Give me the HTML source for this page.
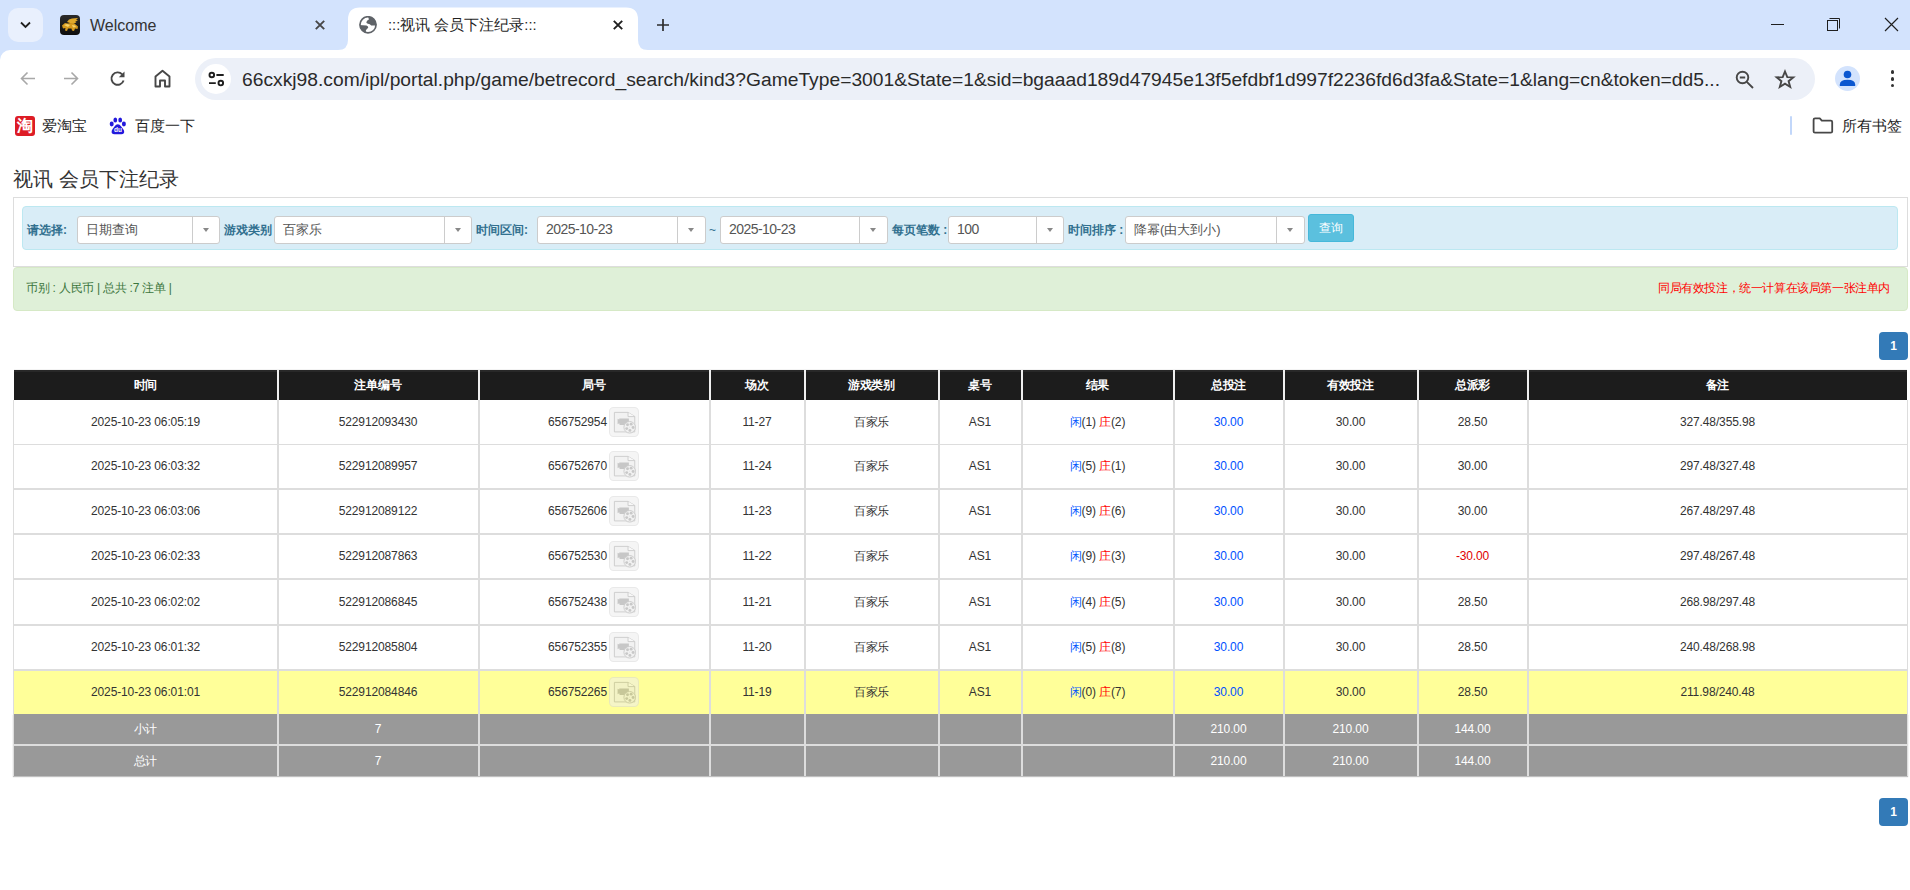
<!DOCTYPE html>
<html><head><meta charset="utf-8">
<style>
*{box-sizing:border-box}
html,body{margin:0;padding:0;width:1910px;height:890px;overflow:hidden;background:#fff;font-family:"Liberation Sans",sans-serif;color:#333}
.a{position:absolute}
.c{position:absolute;text-align:center;font-size:12px;color:#333;white-space:nowrap;letter-spacing:-0.13px}
.c .film{display:inline-block;width:30px;height:30px;vertical-align:middle;margin-left:3px;position:relative;top:-1px;left:-0.5px}
.c .film svg{display:block}
#tabs{position:absolute;left:0;top:0;width:1910px;height:60px;background:#d3e3fd}
#toolbar{position:absolute;left:0;top:50px;width:1910px;height:56px;background:#fff;border-top-left-radius:10px}
.ui{font-family:"Liberation Sans",sans-serif;color:#1f1f1f}
.lbl{position:absolute;top:216px;height:28px;line-height:28px;font-size:12px;font-weight:bold;color:#31708f;white-space:nowrap}
.sel{position:absolute;top:216px;height:28px;background:#fff;border:1px solid #ccc;border-radius:3px;font-size:13px;color:#555;line-height:25px;padding-left:8px;white-space:nowrap}
.sel .dg{font-size:14px;letter-spacing:-0.55px;position:relative;top:-0.5px;left:0}
.sel .dv{position:absolute;top:0;bottom:0;width:1px;background:#ccc}
.sel .ar{position:absolute;top:11px;width:0;height:0;border-left:4px solid transparent;border-right:4px solid transparent;border-top:4px solid #888;border-left-width:3.5px;border-right-width:3.5px}
</style></head><body>
<div id="tabs">
  <div class="a" style="left:8px;top:8px;width:35px;height:34px;border-radius:10px;background:#e9f0fd"></div>
  <svg class="a" style="left:19px;top:19px" width="13" height="12" viewBox="0 0 13 12"><path d="M2 3.5 L6.5 8 L11 3.5" fill="none" stroke="#1f1f1f" stroke-width="1.8"/></svg>
  <div class="a" style="left:60px;top:15px;width:20px;height:20px;border-radius:4px;background:linear-gradient(#2a2a2a,#0d0d0d)"></div>
  <svg class="a" style="left:60px;top:15px" width="20" height="20" viewBox="0 0 20 20"><path d="M7 7 L9 4.5 L12 3.5 L18 3 L16 5 L18 5.2 L15 7 L16.5 7.5 L13 9 Z" fill="#e0a82a"/><path d="M2 10.5 L5 8 L8 8.5 L11 8 L15 9 L18 11.5 L17.5 14 L15 13.5 L14 16 L12 15.5 L11.5 13.5 L8 13.5 L7 16 L5 15.5 L5.5 13 L3 13.5 Z" fill="#d69a1e"/><path d="M4 10 L7 9 L10 10 L8 12 Z M12 10 L15 10.5 L16 12 L13 12.5 Z" fill="#f6d36a"/></svg>
  <div class="a ui" style="left:90px;top:16px;font-size:16px;line-height:20px;color:#333">Welcome</div>
  <svg class="a" style="left:313px;top:18px" width="14" height="14" viewBox="0 0 14 14"><path d="M2.8 2.8 L11.2 11.2 M11.2 2.8 L2.8 11.2" stroke="#474747" stroke-width="1.9"/></svg>
  <!-- active tab -->
  <svg class="a" style="left:338px;top:7px" width="310" height="43" viewBox="0 0 310 43"><path d="M0 43 Q10 43 10 33 V12.5 Q10 0.5 22 0.5 H288 Q300 0.5 300 12.5 V33 Q300 43 310 43 Z" fill="#fff"/></svg>
  <svg class="a" style="left:359px;top:16px" width="18" height="18" viewBox="0 0 18 18"><defs><clipPath id="gc"><circle cx="9" cy="8.8" r="8.2"/></clipPath></defs><g clip-path="url(#gc)" fill="#5f6368"><path d="M9.9 3.6 Q8 4.2 7.3 6.3 Q7.6 7.6 9 7.8 Q11 8 12.2 9.6 L18 9.4 L18 0 L9 0 Z"/><path d="M0 9 L7.4 9.5 Q9.3 10 9.2 11.7 Q7.9 12.7 6.9 14.3 L6.9 18 L0 18 Z"/></g><circle cx="9" cy="8.8" r="8.05" fill="none" stroke="#5f6368" stroke-width="1.7"/></svg>
  <div class="a ui" style="left:388px;top:15px;font-size:14.7px;line-height:20px;color:#1f1f1f;white-space:nowrap">:::视讯 会员下注纪录:::</div>
  <svg class="a" style="left:611px;top:18px" width="14" height="14" viewBox="0 0 14 14"><path d="M2.8 2.8 L11.2 11.2 M11.2 2.8 L2.8 11.2" stroke="#1f1f1f" stroke-width="1.9"/></svg>
  <svg class="a" style="left:656px;top:18px" width="14" height="14" viewBox="0 0 14 14"><path d="M7 1 V13 M1 7 H13" stroke="#2d2d2d" stroke-width="1.7"/></svg>
  <!-- window controls -->
  <div class="a" style="left:1771px;top:24px;width:13px;height:1px;background:#1f1f1f"></div>
  <svg class="a" style="left:1826px;top:17px" width="15" height="15" viewBox="0 0 15 15"><rect x="1.5" y="3.5" width="10" height="10" fill="none" stroke="#1f1f1f" stroke-width="1"/><path d="M3.5 1.5 H13.5 V11.5" fill="none" stroke="#1f1f1f" stroke-width="1"/></svg>
  <svg class="a" style="left:1884px;top:17px" width="15" height="15" viewBox="0 0 15 15"><path d="M1 1 L14 14 M14 1 L1 14" stroke="#1f1f1f" stroke-width="1.15"/></svg>
</div>
<div id="toolbar">
  <svg class="a" style="left:19px;top:20px" width="17" height="17" viewBox="0 0 17 17"><path d="M16 8.5 H3 M8.5 2.5 L2.5 8.5 L8.5 14.5" fill="none" stroke="#a8a8a8" stroke-width="1.6"/></svg>
  <svg class="a" style="left:63px;top:20px" width="17" height="17" viewBox="0 0 17 17"><path d="M1 8.5 H14 M8.5 2.5 L14.5 8.5 L8.5 14.5" fill="none" stroke="#a8a8a8" stroke-width="1.6"/></svg>
  <svg class="a" style="left:109px;top:20px" width="18" height="18" viewBox="0 0 18 18"><path d="M14.6 10.5 A6.2 6.2 0 1 1 13.2 4.3" fill="none" stroke="#474747" stroke-width="1.9"/><path d="M15.5 1.5 V7.2 H9.8 Z" fill="#474747"/></svg>
  <svg class="a" style="left:154px;top:19px" width="17" height="19" viewBox="0 0 17 19"><path d="M1.5 17.5 V7.5 L8.5 1.8 L15.5 7.5 V17.5 H11 V11.5 H6 V17.5 Z" fill="none" stroke="#474747" stroke-width="1.9" stroke-linejoin="round"/></svg>
  <div class="a" style="left:195px;top:8px;width:1620px;height:42px;border-radius:21px;background:#ecf0f8"></div>
  <div class="a" style="left:201px;top:14px;width:30px;height:30px;border-radius:15px;background:#fff"></div>
  <svg class="a" style="left:207px;top:20px" width="18" height="18" viewBox="0 0 18 18"><circle cx="4.8" cy="5" r="2.3" fill="none" stroke="#1f1f1f" stroke-width="1.9"/><path d="M9.4 5 H16.7 M2 13.1 H8.8" stroke="#1f1f1f" stroke-width="1.9"/><circle cx="13.8" cy="13.1" r="2.3" fill="none" stroke="#1f1f1f" stroke-width="1.9"/></svg>
  <div id="url" class="a ui" style="left:242px;top:18px;font-size:19.25px;line-height:24px;color:#2a2a2a;white-space:nowrap">66cxkj98.com/ipl/portal.php/game/betrecord_search/kind3?GameType=3001&amp;State=1&amp;sid=bgaaad189d47945e13f5efdbf1d997f2236fd6d3fa&amp;State=1&amp;lang=cn&amp;token=dd5...</div>
  <svg class="a" style="left:1735px;top:20px" width="20" height="20" viewBox="0 0 20 20"><circle cx="7.5" cy="7.5" r="5.8" fill="none" stroke="#474747" stroke-width="1.9"/><path d="M4.8 7.5 H10.2 M11.8 11.8 L18 18" stroke="#474747" stroke-width="1.9"/></svg>
  <svg class="a" style="left:1774px;top:19px" width="22" height="21" viewBox="0 0 22 21"><path d="M11 2.5 L13.3 8.1 L19.3 8.4 L14.6 12.2 L16.2 18 L11 14.7 L5.8 18 L7.4 12.2 L2.7 8.4 L8.7 8.1 Z" fill="none" stroke="#474747" stroke-width="1.9" stroke-linejoin="miter"/></svg>
  <div class="a" style="left:1835px;top:16px;width:25px;height:25px;border-radius:50%;background:#d3e3fd"></div>
  <svg class="a" style="left:1835px;top:16px" width="25" height="25" viewBox="0 0 25 25"><circle cx="12.5" cy="8.5" r="3.8" fill="#0b57d0"/><path d="M4.8 18.5 Q4.8 13.8 12.5 13.8 Q20.2 13.8 20.2 18.5 V19.9 H4.8 Z" fill="#0b57d0"/></svg>
  <div class="a" style="left:1890.6px;top:20.1px;width:3.6px;height:3.6px;border-radius:50%;background:#333"></div>
  <div class="a" style="left:1890.6px;top:27px;width:3.6px;height:3.6px;border-radius:50%;background:#333"></div>
  <div class="a" style="left:1890.6px;top:33.8px;width:3.6px;height:3.6px;border-radius:50%;background:#333"></div>
</div>
<!-- bookmarks -->
<div class="a" style="left:15px;top:116px;width:20px;height:20px;border-radius:3px;background:#dd1c25;color:#fff;font-size:16px;font-weight:bold;line-height:20px;text-align:center;overflow:hidden">淘</div>
<div class="a ui" style="left:42px;top:116px;font-size:15px;line-height:20px;color:#1f1f1f;white-space:nowrap">爱淘宝</div>
<svg class="a" style="left:109px;top:116px" width="18" height="20" viewBox="0 0 18 20"><ellipse cx="2.7" cy="8" rx="2" ry="2.4" fill="#2319dc"/><ellipse cx="6.3" cy="3.9" rx="1.9" ry="2.5" fill="#2319dc"/><ellipse cx="11.2" cy="3.9" rx="1.9" ry="2.5" fill="#2319dc"/><ellipse cx="14.9" cy="8" rx="2" ry="2.4" fill="#2319dc"/><path d="M8.8 8.2 Q7 8.2 5.5 10.5 Q3.5 13 2.8 14.5 Q1.8 18.3 5.5 18.3 H12.3 Q16 18.3 15 14.5 Q14.2 13 12.2 10.5 Q10.7 8.2 8.8 8.2 Z" fill="#2319dc"/><text x="8.9" y="16.3" font-size="6.5" fill="#fff" font-family="Liberation Sans" text-anchor="middle" font-weight="bold">du</text></svg>
<div class="a ui" style="left:135px;top:116px;font-size:15px;line-height:20px;color:#1f1f1f;white-space:nowrap">百度一下</div>
<div class="a" style="left:1790px;top:116px;width:2px;height:19px;background:#c2d7fa;border-radius:1px"></div>
<svg class="a" style="left:1812px;top:117px" width="22" height="17" viewBox="0 0 22 17"><path d="M1.6 2.8 Q1.6 1.4 3 1.4 H7.8 L9.8 3.6 H18.8 Q20.2 3.6 20.2 5 V14.4 Q20.2 15.6 18.8 15.6 H3 Q1.6 15.6 1.6 14.4 Z" fill="none" stroke="#474747" stroke-width="1.8" stroke-linejoin="round"/></svg>
<div class="a ui" style="left:1842px;top:116px;font-size:15px;line-height:20px;color:#1f1f1f;white-space:nowrap">所有书签</div>

<!-- page -->
<div class="a" style="left:13px;top:166px;font-size:20px;line-height:26px;color:#333;white-space:nowrap">视讯 会员下注纪录</div>
<div class="a" style="left:13px;top:197px;width:1895px;height:70px;border:1px solid #ddd;background:#fff"></div>
<div class="a" style="left:22px;top:206px;width:1876px;height:44px;border:1px solid #bce8f1;background:#d9edf7;border-radius:4px"></div>
<div class="lbl" style="left:27px">请选择:</div>
<div class="sel" style="left:77px;width:143px">日期查询<div class="dv" style="left:114px"></div><div class="ar" style="left:125px"></div></div>
<div class="lbl" style="left:224px">游戏类别</div>
<div class="sel" style="left:274px;width:198px">百家乐<div class="dv" style="left:169px"></div><div class="ar" style="left:180px"></div></div>
<div class="lbl" style="left:476px">时间区间:</div>
<div class="sel" style="left:537px;width:169px"><span class="dg">2025-10-23</span><div class="dv" style="left:139px"></div><div class="ar" style="left:150px"></div></div>
<div class="a" style="left:709px;top:216px;line-height:28px;font-size:12px;color:#31708f">~</div>
<div class="sel" style="left:720px;width:168px"><span class="dg">2025-10-23</span><div class="dv" style="left:138px"></div><div class="ar" style="left:149px"></div></div>
<div class="lbl" style="left:892px">每页笔数 :</div>
<div class="sel" style="left:948px;width:116px"><span class="dg">100</span><div class="dv" style="left:87px"></div><div class="ar" style="left:98px"></div></div>
<div class="lbl" style="left:1068px">时间排序 :</div>
<div class="sel" style="left:1125px;width:180px">降幂(由大到小)<div class="dv" style="left:150px"></div><div class="ar" style="left:161px"></div></div>
<div class="a" style="left:1308px;top:214px;width:46px;height:28px;border-radius:3px;background:#5bc0de;border:1px solid #46b8da;color:#fff;font-size:12px;line-height:26px;text-align:center">查询</div>

<div class="a" style="left:13px;top:267px;width:1895px;height:44px;border:1px solid #d6e9c6;background:#dff0d8;border-radius:4px"></div>
<div class="a" style="left:26px;top:280px;font-size:12px;letter-spacing:-0.25px;line-height:17px;color:#3c763d;white-space:nowrap">币别 : 人民币 | 总共 :7 注单 |</div>
<div class="a" style="right:20px;top:280px;font-size:12px;letter-spacing:-0.4px;line-height:17px;color:#ff0000;white-space:nowrap">同局有效投注，统一计算在该局第一张注单内</div>

<div class="a" style="left:1879px;top:332px;width:29px;height:28px;border-radius:4px;background:#337ab7;color:#fff;font-size:12px;font-weight:bold;line-height:28px;text-align:center">1</div>
<div style="position:absolute;left:14px;top:370px;width:1893px;height:30px;background:linear-gradient(#282828 0,#282828 2px,#1c1c1c 2px)"></div>
<div class="c" style="left:13.5px;width:264.0px;top:370px;height:30px;line-height:30px;color:#fff;font-weight:bold">时间</div>
<div class="c" style="left:277.5px;width:201.0px;top:370px;height:30px;line-height:30px;color:#fff;font-weight:bold">注单编号</div>
<div class="c" style="left:478.5px;width:231.0px;top:370px;height:30px;line-height:30px;color:#fff;font-weight:bold">局号</div>
<div class="c" style="left:709.5px;width:95.0px;top:370px;height:30px;line-height:30px;color:#fff;font-weight:bold">场次</div>
<div class="c" style="left:804.5px;width:134.0px;top:370px;height:30px;line-height:30px;color:#fff;font-weight:bold">游戏类别</div>
<div class="c" style="left:938.5px;width:83.0px;top:370px;height:30px;line-height:30px;color:#fff;font-weight:bold">桌号</div>
<div class="c" style="left:1021.5px;width:152.0px;top:370px;height:30px;line-height:30px;color:#fff;font-weight:bold">结果</div>
<div class="c" style="left:1173.5px;width:110.0px;top:370px;height:30px;line-height:30px;color:#fff;font-weight:bold">总投注</div>
<div class="c" style="left:1283.5px;width:134.0px;top:370px;height:30px;line-height:30px;color:#fff;font-weight:bold">有效投注</div>
<div class="c" style="left:1417.5px;width:110.0px;top:370px;height:30px;line-height:30px;color:#fff;font-weight:bold">总派彩</div>
<div class="c" style="left:1527.5px;width:380.0px;top:370px;height:30px;line-height:30px;color:#fff;font-weight:bold">备注</div>
<div style="position:absolute;left:13px;top:400px;width:1895px;height:44px;background:#fff"></div>
<div style="position:absolute;left:13px;top:445px;width:1895px;height:43px;background:#fff"></div>
<div style="position:absolute;left:13px;top:490px;width:1895px;height:43px;background:#fff"></div>
<div style="position:absolute;left:13px;top:535px;width:1895px;height:43px;background:#fff"></div>
<div style="position:absolute;left:13px;top:580px;width:1895px;height:44px;background:#fff"></div>
<div style="position:absolute;left:13px;top:626px;width:1895px;height:43px;background:#fff"></div>
<div style="position:absolute;left:13px;top:671px;width:1895px;height:43px;background:#ffff99"></div>
<div style="position:absolute;left:13px;top:714px;width:1895px;height:62px;background:#999;box-shadow:0 1px 1px rgba(0,0,0,.25)"></div>
<div style="position:absolute;left:13px;top:744px;width:1895px;height:2px;background:#ddd"></div>
<div style="position:absolute;left:13px;top:444px;width:1895px;height:1px;background:#ddd"></div>
<div style="position:absolute;left:13px;top:488px;width:1895px;height:2px;background:#ddd"></div>
<div style="position:absolute;left:13px;top:533px;width:1895px;height:2px;background:#ddd"></div>
<div style="position:absolute;left:13px;top:578px;width:1895px;height:2px;background:#ddd"></div>
<div style="position:absolute;left:13px;top:624px;width:1895px;height:2px;background:#ddd"></div>
<div style="position:absolute;left:13px;top:669px;width:1895px;height:2px;background:#ddd"></div>
<div style="position:absolute;left:277.0px;top:370px;width:2px;height:406px;background:#ddd"></div>
<div style="position:absolute;left:478.0px;top:370px;width:2px;height:406px;background:#ddd"></div>
<div style="position:absolute;left:709.0px;top:370px;width:2px;height:406px;background:#ddd"></div>
<div style="position:absolute;left:804.0px;top:370px;width:2px;height:406px;background:#ddd"></div>
<div style="position:absolute;left:938.0px;top:370px;width:2px;height:406px;background:#ddd"></div>
<div style="position:absolute;left:1021.0px;top:370px;width:2px;height:406px;background:#ddd"></div>
<div style="position:absolute;left:1173.0px;top:370px;width:2px;height:406px;background:#ddd"></div>
<div style="position:absolute;left:1283.0px;top:370px;width:2px;height:406px;background:#ddd"></div>
<div style="position:absolute;left:1417.0px;top:370px;width:2px;height:406px;background:#ddd"></div>
<div style="position:absolute;left:1527.0px;top:370px;width:2px;height:406px;background:#ddd"></div>
<div style="position:absolute;left:13px;top:400px;width:1px;height:376px;background:#ddd"></div>
<div style="position:absolute;left:277.0px;top:369px;width:2px;height:31px;background:#efefef"></div>
<div style="position:absolute;left:478.0px;top:369px;width:2px;height:31px;background:#efefef"></div>
<div style="position:absolute;left:709.0px;top:369px;width:2px;height:31px;background:#efefef"></div>
<div style="position:absolute;left:804.0px;top:369px;width:2px;height:31px;background:#efefef"></div>
<div style="position:absolute;left:938.0px;top:369px;width:2px;height:31px;background:#efefef"></div>
<div style="position:absolute;left:1021.0px;top:369px;width:2px;height:31px;background:#efefef"></div>
<div style="position:absolute;left:1173.0px;top:369px;width:2px;height:31px;background:#efefef"></div>
<div style="position:absolute;left:1283.0px;top:369px;width:2px;height:31px;background:#efefef"></div>
<div style="position:absolute;left:1417.0px;top:369px;width:2px;height:31px;background:#efefef"></div>
<div style="position:absolute;left:1527.0px;top:369px;width:2px;height:31px;background:#efefef"></div>
<div style="position:absolute;left:14px;top:369px;width:1893px;height:1px;background:#f3f3f3"></div>
<div style="position:absolute;left:1907px;top:400px;width:1px;height:376px;background:#ddd"></div>
<div class="c" style="left:13.5px;width:264.0px;top:400px;height:44px;line-height:44px;">2025-10-23 06:05:19</div>
<div class="c" style="left:277.5px;width:201.0px;top:400px;height:44px;line-height:44px;">522912093430</div>
<div class="c" style="left:478.5px;width:231.0px;top:400px;height:44px;line-height:44px;"><span class="ju">656752954</span><span class="film"><svg width="30" height="30" viewBox="0 0 29 29" style="opacity:.55"><rect x="0.5" y="0.5" width="28" height="28" rx="4" fill="#eeeeee" stroke="#d8d8d8"/>
<path d="M5.2 5.2 H18.4 L24.9 9.1 V24.1 H5.2 Z" fill="#e9e9e9" stroke="#a2a2a2" stroke-width="0.9"/>
<path d="M18.4 5.2 V9.3 H24.9" fill="#f4f4f4" stroke="#a2a2a2" stroke-width="0.9"/>
<path d="M8.3 11.3 L9.9 12.2 V11.1 H19.2 V17.5 H10.3 L9.9 15.8 L8.3 16.7 Z" fill="#9a9a9a"/>
<circle cx="20" cy="19.6" r="5.6" fill="#e6e6e6" stroke="#a2a2a2" stroke-width="0.9"/>
<circle cx="17.9" cy="17.2" r="1.4" fill="#9c9c9c"/><circle cx="21.4" cy="16.6" r="1.4" fill="#9c9c9c"/>
<circle cx="23.3" cy="19.8" r="1.4" fill="#9c9c9c"/><circle cx="17.1" cy="20.9" r="1.4" fill="#9c9c9c"/>
<circle cx="20.2" cy="22.6" r="1.4" fill="#9c9c9c"/><circle cx="19.9" cy="19.4" r="0.4" fill="#aaa"/></svg></span></div>
<div class="c" style="left:709.5px;width:95.0px;top:400px;height:44px;line-height:44px;">11-27</div>
<div class="c" style="left:804.5px;width:134.0px;top:400px;height:44px;line-height:44px;">百家乐</div>
<div class="c" style="left:938.5px;width:83.0px;top:400px;height:44px;line-height:44px;">AS1</div>
<div class="c" style="left:1021.5px;width:152.0px;top:400px;height:44px;line-height:44px;"><span style="color:#0055ff">闲</span>(1) <span style="color:#ff0000">庄</span>(2)</div>
<div class="c" style="left:1173.5px;width:110.0px;top:400px;height:44px;line-height:44px;color:#0050ff">30.00</div>
<div class="c" style="left:1283.5px;width:134.0px;top:400px;height:44px;line-height:44px;">30.00</div>
<div class="c" style="left:1417.5px;width:110.0px;top:400px;height:44px;line-height:44px;">28.50</div>
<div class="c" style="left:1527.5px;width:380.0px;top:400px;height:44px;line-height:44px;">327.48/355.98</div>
<div class="c" style="left:13.5px;width:264.0px;top:445px;height:43px;line-height:43px;">2025-10-23 06:03:32</div>
<div class="c" style="left:277.5px;width:201.0px;top:445px;height:43px;line-height:43px;">522912089957</div>
<div class="c" style="left:478.5px;width:231.0px;top:445px;height:43px;line-height:43px;"><span class="ju">656752670</span><span class="film"><svg width="30" height="30" viewBox="0 0 29 29" style="opacity:.55"><rect x="0.5" y="0.5" width="28" height="28" rx="4" fill="#eeeeee" stroke="#d8d8d8"/>
<path d="M5.2 5.2 H18.4 L24.9 9.1 V24.1 H5.2 Z" fill="#e9e9e9" stroke="#a2a2a2" stroke-width="0.9"/>
<path d="M18.4 5.2 V9.3 H24.9" fill="#f4f4f4" stroke="#a2a2a2" stroke-width="0.9"/>
<path d="M8.3 11.3 L9.9 12.2 V11.1 H19.2 V17.5 H10.3 L9.9 15.8 L8.3 16.7 Z" fill="#9a9a9a"/>
<circle cx="20" cy="19.6" r="5.6" fill="#e6e6e6" stroke="#a2a2a2" stroke-width="0.9"/>
<circle cx="17.9" cy="17.2" r="1.4" fill="#9c9c9c"/><circle cx="21.4" cy="16.6" r="1.4" fill="#9c9c9c"/>
<circle cx="23.3" cy="19.8" r="1.4" fill="#9c9c9c"/><circle cx="17.1" cy="20.9" r="1.4" fill="#9c9c9c"/>
<circle cx="20.2" cy="22.6" r="1.4" fill="#9c9c9c"/><circle cx="19.9" cy="19.4" r="0.4" fill="#aaa"/></svg></span></div>
<div class="c" style="left:709.5px;width:95.0px;top:445px;height:43px;line-height:43px;">11-24</div>
<div class="c" style="left:804.5px;width:134.0px;top:445px;height:43px;line-height:43px;">百家乐</div>
<div class="c" style="left:938.5px;width:83.0px;top:445px;height:43px;line-height:43px;">AS1</div>
<div class="c" style="left:1021.5px;width:152.0px;top:445px;height:43px;line-height:43px;"><span style="color:#0055ff">闲</span>(5) <span style="color:#ff0000">庄</span>(1)</div>
<div class="c" style="left:1173.5px;width:110.0px;top:445px;height:43px;line-height:43px;color:#0050ff">30.00</div>
<div class="c" style="left:1283.5px;width:134.0px;top:445px;height:43px;line-height:43px;">30.00</div>
<div class="c" style="left:1417.5px;width:110.0px;top:445px;height:43px;line-height:43px;">30.00</div>
<div class="c" style="left:1527.5px;width:380.0px;top:445px;height:43px;line-height:43px;">297.48/327.48</div>
<div class="c" style="left:13.5px;width:264.0px;top:490px;height:43px;line-height:43px;">2025-10-23 06:03:06</div>
<div class="c" style="left:277.5px;width:201.0px;top:490px;height:43px;line-height:43px;">522912089122</div>
<div class="c" style="left:478.5px;width:231.0px;top:490px;height:43px;line-height:43px;"><span class="ju">656752606</span><span class="film"><svg width="30" height="30" viewBox="0 0 29 29" style="opacity:.55"><rect x="0.5" y="0.5" width="28" height="28" rx="4" fill="#eeeeee" stroke="#d8d8d8"/>
<path d="M5.2 5.2 H18.4 L24.9 9.1 V24.1 H5.2 Z" fill="#e9e9e9" stroke="#a2a2a2" stroke-width="0.9"/>
<path d="M18.4 5.2 V9.3 H24.9" fill="#f4f4f4" stroke="#a2a2a2" stroke-width="0.9"/>
<path d="M8.3 11.3 L9.9 12.2 V11.1 H19.2 V17.5 H10.3 L9.9 15.8 L8.3 16.7 Z" fill="#9a9a9a"/>
<circle cx="20" cy="19.6" r="5.6" fill="#e6e6e6" stroke="#a2a2a2" stroke-width="0.9"/>
<circle cx="17.9" cy="17.2" r="1.4" fill="#9c9c9c"/><circle cx="21.4" cy="16.6" r="1.4" fill="#9c9c9c"/>
<circle cx="23.3" cy="19.8" r="1.4" fill="#9c9c9c"/><circle cx="17.1" cy="20.9" r="1.4" fill="#9c9c9c"/>
<circle cx="20.2" cy="22.6" r="1.4" fill="#9c9c9c"/><circle cx="19.9" cy="19.4" r="0.4" fill="#aaa"/></svg></span></div>
<div class="c" style="left:709.5px;width:95.0px;top:490px;height:43px;line-height:43px;">11-23</div>
<div class="c" style="left:804.5px;width:134.0px;top:490px;height:43px;line-height:43px;">百家乐</div>
<div class="c" style="left:938.5px;width:83.0px;top:490px;height:43px;line-height:43px;">AS1</div>
<div class="c" style="left:1021.5px;width:152.0px;top:490px;height:43px;line-height:43px;"><span style="color:#0055ff">闲</span>(9) <span style="color:#ff0000">庄</span>(6)</div>
<div class="c" style="left:1173.5px;width:110.0px;top:490px;height:43px;line-height:43px;color:#0050ff">30.00</div>
<div class="c" style="left:1283.5px;width:134.0px;top:490px;height:43px;line-height:43px;">30.00</div>
<div class="c" style="left:1417.5px;width:110.0px;top:490px;height:43px;line-height:43px;">30.00</div>
<div class="c" style="left:1527.5px;width:380.0px;top:490px;height:43px;line-height:43px;">267.48/297.48</div>
<div class="c" style="left:13.5px;width:264.0px;top:535px;height:43px;line-height:43px;">2025-10-23 06:02:33</div>
<div class="c" style="left:277.5px;width:201.0px;top:535px;height:43px;line-height:43px;">522912087863</div>
<div class="c" style="left:478.5px;width:231.0px;top:535px;height:43px;line-height:43px;"><span class="ju">656752530</span><span class="film"><svg width="30" height="30" viewBox="0 0 29 29" style="opacity:.55"><rect x="0.5" y="0.5" width="28" height="28" rx="4" fill="#eeeeee" stroke="#d8d8d8"/>
<path d="M5.2 5.2 H18.4 L24.9 9.1 V24.1 H5.2 Z" fill="#e9e9e9" stroke="#a2a2a2" stroke-width="0.9"/>
<path d="M18.4 5.2 V9.3 H24.9" fill="#f4f4f4" stroke="#a2a2a2" stroke-width="0.9"/>
<path d="M8.3 11.3 L9.9 12.2 V11.1 H19.2 V17.5 H10.3 L9.9 15.8 L8.3 16.7 Z" fill="#9a9a9a"/>
<circle cx="20" cy="19.6" r="5.6" fill="#e6e6e6" stroke="#a2a2a2" stroke-width="0.9"/>
<circle cx="17.9" cy="17.2" r="1.4" fill="#9c9c9c"/><circle cx="21.4" cy="16.6" r="1.4" fill="#9c9c9c"/>
<circle cx="23.3" cy="19.8" r="1.4" fill="#9c9c9c"/><circle cx="17.1" cy="20.9" r="1.4" fill="#9c9c9c"/>
<circle cx="20.2" cy="22.6" r="1.4" fill="#9c9c9c"/><circle cx="19.9" cy="19.4" r="0.4" fill="#aaa"/></svg></span></div>
<div class="c" style="left:709.5px;width:95.0px;top:535px;height:43px;line-height:43px;">11-22</div>
<div class="c" style="left:804.5px;width:134.0px;top:535px;height:43px;line-height:43px;">百家乐</div>
<div class="c" style="left:938.5px;width:83.0px;top:535px;height:43px;line-height:43px;">AS1</div>
<div class="c" style="left:1021.5px;width:152.0px;top:535px;height:43px;line-height:43px;"><span style="color:#0055ff">闲</span>(9) <span style="color:#ff0000">庄</span>(3)</div>
<div class="c" style="left:1173.5px;width:110.0px;top:535px;height:43px;line-height:43px;color:#0050ff">30.00</div>
<div class="c" style="left:1283.5px;width:134.0px;top:535px;height:43px;line-height:43px;">30.00</div>
<div class="c" style="left:1417.5px;width:110.0px;top:535px;height:43px;line-height:43px;color:#e00000">-30.00</div>
<div class="c" style="left:1527.5px;width:380.0px;top:535px;height:43px;line-height:43px;">297.48/267.48</div>
<div class="c" style="left:13.5px;width:264.0px;top:580px;height:44px;line-height:44px;">2025-10-23 06:02:02</div>
<div class="c" style="left:277.5px;width:201.0px;top:580px;height:44px;line-height:44px;">522912086845</div>
<div class="c" style="left:478.5px;width:231.0px;top:580px;height:44px;line-height:44px;"><span class="ju">656752438</span><span class="film"><svg width="30" height="30" viewBox="0 0 29 29" style="opacity:.55"><rect x="0.5" y="0.5" width="28" height="28" rx="4" fill="#eeeeee" stroke="#d8d8d8"/>
<path d="M5.2 5.2 H18.4 L24.9 9.1 V24.1 H5.2 Z" fill="#e9e9e9" stroke="#a2a2a2" stroke-width="0.9"/>
<path d="M18.4 5.2 V9.3 H24.9" fill="#f4f4f4" stroke="#a2a2a2" stroke-width="0.9"/>
<path d="M8.3 11.3 L9.9 12.2 V11.1 H19.2 V17.5 H10.3 L9.9 15.8 L8.3 16.7 Z" fill="#9a9a9a"/>
<circle cx="20" cy="19.6" r="5.6" fill="#e6e6e6" stroke="#a2a2a2" stroke-width="0.9"/>
<circle cx="17.9" cy="17.2" r="1.4" fill="#9c9c9c"/><circle cx="21.4" cy="16.6" r="1.4" fill="#9c9c9c"/>
<circle cx="23.3" cy="19.8" r="1.4" fill="#9c9c9c"/><circle cx="17.1" cy="20.9" r="1.4" fill="#9c9c9c"/>
<circle cx="20.2" cy="22.6" r="1.4" fill="#9c9c9c"/><circle cx="19.9" cy="19.4" r="0.4" fill="#aaa"/></svg></span></div>
<div class="c" style="left:709.5px;width:95.0px;top:580px;height:44px;line-height:44px;">11-21</div>
<div class="c" style="left:804.5px;width:134.0px;top:580px;height:44px;line-height:44px;">百家乐</div>
<div class="c" style="left:938.5px;width:83.0px;top:580px;height:44px;line-height:44px;">AS1</div>
<div class="c" style="left:1021.5px;width:152.0px;top:580px;height:44px;line-height:44px;"><span style="color:#0055ff">闲</span>(4) <span style="color:#ff0000">庄</span>(5)</div>
<div class="c" style="left:1173.5px;width:110.0px;top:580px;height:44px;line-height:44px;color:#0050ff">30.00</div>
<div class="c" style="left:1283.5px;width:134.0px;top:580px;height:44px;line-height:44px;">30.00</div>
<div class="c" style="left:1417.5px;width:110.0px;top:580px;height:44px;line-height:44px;">28.50</div>
<div class="c" style="left:1527.5px;width:380.0px;top:580px;height:44px;line-height:44px;">268.98/297.48</div>
<div class="c" style="left:13.5px;width:264.0px;top:626px;height:43px;line-height:43px;">2025-10-23 06:01:32</div>
<div class="c" style="left:277.5px;width:201.0px;top:626px;height:43px;line-height:43px;">522912085804</div>
<div class="c" style="left:478.5px;width:231.0px;top:626px;height:43px;line-height:43px;"><span class="ju">656752355</span><span class="film"><svg width="30" height="30" viewBox="0 0 29 29" style="opacity:.55"><rect x="0.5" y="0.5" width="28" height="28" rx="4" fill="#eeeeee" stroke="#d8d8d8"/>
<path d="M5.2 5.2 H18.4 L24.9 9.1 V24.1 H5.2 Z" fill="#e9e9e9" stroke="#a2a2a2" stroke-width="0.9"/>
<path d="M18.4 5.2 V9.3 H24.9" fill="#f4f4f4" stroke="#a2a2a2" stroke-width="0.9"/>
<path d="M8.3 11.3 L9.9 12.2 V11.1 H19.2 V17.5 H10.3 L9.9 15.8 L8.3 16.7 Z" fill="#9a9a9a"/>
<circle cx="20" cy="19.6" r="5.6" fill="#e6e6e6" stroke="#a2a2a2" stroke-width="0.9"/>
<circle cx="17.9" cy="17.2" r="1.4" fill="#9c9c9c"/><circle cx="21.4" cy="16.6" r="1.4" fill="#9c9c9c"/>
<circle cx="23.3" cy="19.8" r="1.4" fill="#9c9c9c"/><circle cx="17.1" cy="20.9" r="1.4" fill="#9c9c9c"/>
<circle cx="20.2" cy="22.6" r="1.4" fill="#9c9c9c"/><circle cx="19.9" cy="19.4" r="0.4" fill="#aaa"/></svg></span></div>
<div class="c" style="left:709.5px;width:95.0px;top:626px;height:43px;line-height:43px;">11-20</div>
<div class="c" style="left:804.5px;width:134.0px;top:626px;height:43px;line-height:43px;">百家乐</div>
<div class="c" style="left:938.5px;width:83.0px;top:626px;height:43px;line-height:43px;">AS1</div>
<div class="c" style="left:1021.5px;width:152.0px;top:626px;height:43px;line-height:43px;"><span style="color:#0055ff">闲</span>(5) <span style="color:#ff0000">庄</span>(8)</div>
<div class="c" style="left:1173.5px;width:110.0px;top:626px;height:43px;line-height:43px;color:#0050ff">30.00</div>
<div class="c" style="left:1283.5px;width:134.0px;top:626px;height:43px;line-height:43px;">30.00</div>
<div class="c" style="left:1417.5px;width:110.0px;top:626px;height:43px;line-height:43px;">28.50</div>
<div class="c" style="left:1527.5px;width:380.0px;top:626px;height:43px;line-height:43px;">240.48/268.98</div>
<div class="c" style="left:13.5px;width:264.0px;top:671px;height:43px;line-height:43px;">2025-10-23 06:01:01</div>
<div class="c" style="left:277.5px;width:201.0px;top:671px;height:43px;line-height:43px;">522912084846</div>
<div class="c" style="left:478.5px;width:231.0px;top:671px;height:43px;line-height:43px;"><span class="ju">656752265</span><span class="film"><svg width="30" height="30" viewBox="0 0 29 29" style="opacity:.55"><rect x="0.5" y="0.5" width="28" height="28" rx="4" fill="#eeeeee" stroke="#d8d8d8"/>
<path d="M5.2 5.2 H18.4 L24.9 9.1 V24.1 H5.2 Z" fill="#e9e9e9" stroke="#a2a2a2" stroke-width="0.9"/>
<path d="M18.4 5.2 V9.3 H24.9" fill="#f4f4f4" stroke="#a2a2a2" stroke-width="0.9"/>
<path d="M8.3 11.3 L9.9 12.2 V11.1 H19.2 V17.5 H10.3 L9.9 15.8 L8.3 16.7 Z" fill="#9a9a9a"/>
<circle cx="20" cy="19.6" r="5.6" fill="#e6e6e6" stroke="#a2a2a2" stroke-width="0.9"/>
<circle cx="17.9" cy="17.2" r="1.4" fill="#9c9c9c"/><circle cx="21.4" cy="16.6" r="1.4" fill="#9c9c9c"/>
<circle cx="23.3" cy="19.8" r="1.4" fill="#9c9c9c"/><circle cx="17.1" cy="20.9" r="1.4" fill="#9c9c9c"/>
<circle cx="20.2" cy="22.6" r="1.4" fill="#9c9c9c"/><circle cx="19.9" cy="19.4" r="0.4" fill="#aaa"/></svg></span></div>
<div class="c" style="left:709.5px;width:95.0px;top:671px;height:43px;line-height:43px;">11-19</div>
<div class="c" style="left:804.5px;width:134.0px;top:671px;height:43px;line-height:43px;">百家乐</div>
<div class="c" style="left:938.5px;width:83.0px;top:671px;height:43px;line-height:43px;">AS1</div>
<div class="c" style="left:1021.5px;width:152.0px;top:671px;height:43px;line-height:43px;"><span style="color:#0055ff">闲</span>(0) <span style="color:#ff0000">庄</span>(7)</div>
<div class="c" style="left:1173.5px;width:110.0px;top:671px;height:43px;line-height:43px;color:#0050ff">30.00</div>
<div class="c" style="left:1283.5px;width:134.0px;top:671px;height:43px;line-height:43px;">30.00</div>
<div class="c" style="left:1417.5px;width:110.0px;top:671px;height:43px;line-height:43px;">28.50</div>
<div class="c" style="left:1527.5px;width:380.0px;top:671px;height:43px;line-height:43px;">211.98/240.48</div>
<div class="c" style="left:13.5px;width:264.0px;top:714px;height:30px;line-height:30px;color:#fff">小计</div>
<div class="c" style="left:277.5px;width:201.0px;top:714px;height:30px;line-height:30px;color:#fff">7</div>
<div class="c" style="left:1173.5px;width:110.0px;top:714px;height:30px;line-height:30px;color:#fff">210.00</div>
<div class="c" style="left:1283.5px;width:134.0px;top:714px;height:30px;line-height:30px;color:#fff">210.00</div>
<div class="c" style="left:1417.5px;width:110.0px;top:714px;height:30px;line-height:30px;color:#fff">144.00</div>
<div class="c" style="left:13.5px;width:264.0px;top:746px;height:30px;line-height:30px;color:#fff">总计</div>
<div class="c" style="left:277.5px;width:201.0px;top:746px;height:30px;line-height:30px;color:#fff">7</div>
<div class="c" style="left:1173.5px;width:110.0px;top:746px;height:30px;line-height:30px;color:#fff">210.00</div>
<div class="c" style="left:1283.5px;width:134.0px;top:746px;height:30px;line-height:30px;color:#fff">210.00</div>
<div class="c" style="left:1417.5px;width:110.0px;top:746px;height:30px;line-height:30px;color:#fff">144.00</div>
<div class="a" style="left:1879px;top:798px;width:29px;height:28px;border-radius:4px;background:#337ab7;color:#fff;font-size:12px;font-weight:bold;line-height:28px;text-align:center">1</div>
</body></html>
